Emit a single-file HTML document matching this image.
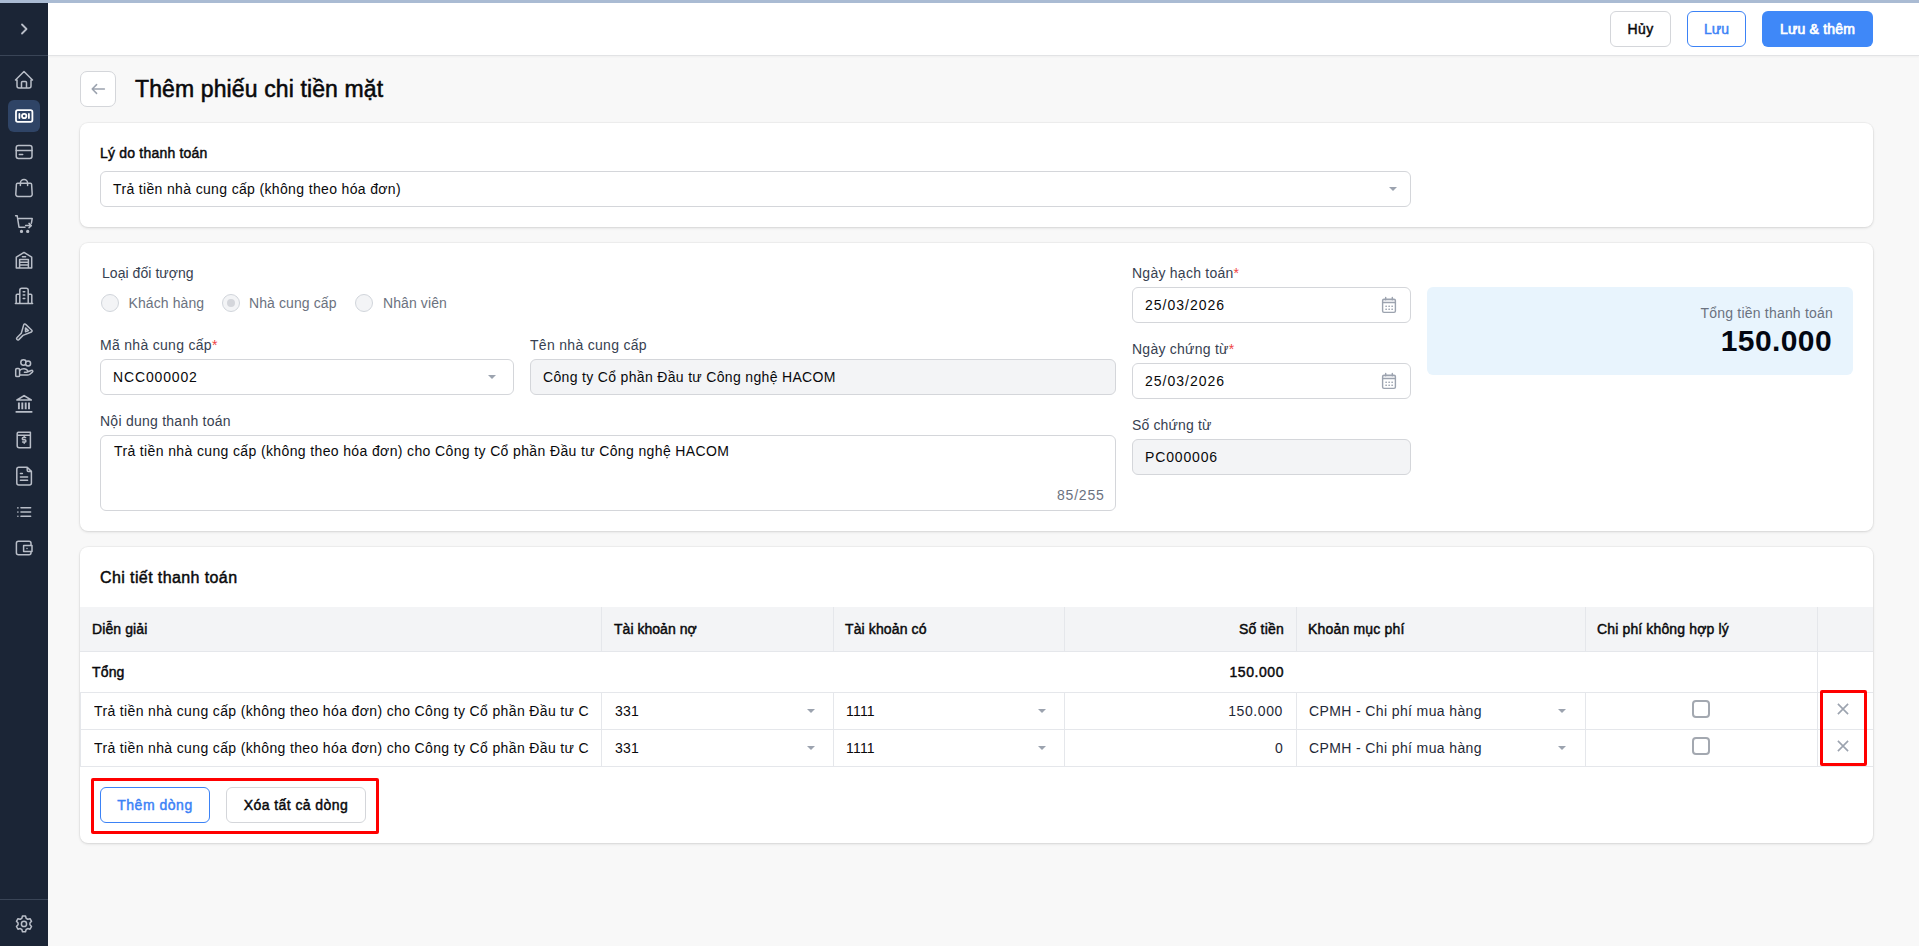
<!DOCTYPE html>
<html lang="vi">
<head>
<meta charset="utf-8">
<style>
*{box-sizing:border-box;margin:0;padding:0}
html,body{width:1919px;height:946px;overflow:hidden}
body{position:relative;background:#f8f8f8;font-family:"Liberation Sans",sans-serif;color:#09090b;font-size:14px}
.a{position:absolute}
.t{position:absolute;white-space:nowrap;line-height:20px;font-size:14px}
.b{font-weight:bold}
.sb{font-weight:normal;-webkit-text-stroke-width:.45px}
#topstrip{left:0;top:0;width:1919px;height:3px;background:#aabbd3}
#sidebar{left:0;top:3px;width:48px;height:943px;background:#1b2536}
#header{left:48px;top:3px;width:1871px;height:53px;background:#fff;border-bottom:1px solid #e2e3e5;box-shadow:0 1px 2px rgba(0,0,0,.04)}
.btn{position:absolute;height:36px;border-radius:6px;-webkit-text-stroke-width:.45px;font-size:14px;display:flex;align-items:center;justify-content:center;white-space:nowrap}
.card{position:absolute;left:80px;width:1793px;background:#fff;border-radius:8px;box-shadow:0 1px 3px rgba(0,0,0,.12),0 0 0 1px rgba(0,0,0,.03)}
.lbl{color:#374151}
.req{color:#ef4444}
.inp{position:absolute;height:36px;border:1px solid #d4d6da;border-radius:6px;background:#fff}
.dis{background:#f3f4f6}
.tri{position:absolute;width:0;height:0;border-left:4px solid transparent;border-right:4px solid transparent;border-top:4px solid #9ca3af}
.vl{position:absolute;width:1px;background:#e5e7eb}
.hl{position:absolute;height:1px;background:#e5e7eb}
.radio{position:absolute;width:18px;height:18px;border-radius:50%;border:1.5px solid #d1d5db;background:#f3f4f6}
.chk{position:absolute;width:18px;height:18px;border-radius:4px;border:2px solid #a3a8b0;background:#fff}
.red{position:absolute;border:3px solid #ff0000;border-radius:2px}
</style>
</head>
<body>
<div id="topstrip" class="a"></div>
<div id="sidebar" class="a"></div>
<div id="header" class="a"></div>

<!-- sidebar icons -->
<div class="a" style="left:0;top:55px;width:48px;height:1px;background:#3a4557"></div>
<div class="a" style="left:0;top:899px;width:48px;height:1px;background:#3a4557"></div>
<div class="a" style="left:8px;top:100px;width:32px;height:32px;border-radius:6px;background:#2f4466"></div>
<svg class="a" style="left:0;top:0" width="48" height="946" viewBox="0 0 48 946" fill="none" stroke="#b9bec8" stroke-width="1.5" stroke-linecap="round" stroke-linejoin="round">
  <!-- chevron -->
  <path d="M22 24.5l4.5 4.5l-4.5 4.5" stroke-width="1.8"/>
  <!-- home -->
  <path d="M17 80h-1.5l8.5-8.5l8.5 8.5h-1.5M17 80v6a2 2 0 0 0 2 2h10a2 2 0 0 0 2-2v-6M21.5 88v-5.5a1 1 0 0 1 1-1h3a1 1 0 0 1 1 1v5.5"/>
  <!-- cash banknote active -->
  <g stroke="#fff" stroke-width="1.8">
    <rect x="16" y="110.2" width="16.4" height="11.6" rx="1.8"/>
    <circle cx="24.2" cy="116" r="2.2"/>
    <path d="M19.4 114v4M28.9 114v4"/>
  </g>
  <!-- credit card -->
  <rect x="16.2" y="145.6" width="15.8" height="12.8" rx="2.2"/>
  <path d="M16.2 150.4h15.8M19.3 154.4h3.4"/>
  <!-- bag -->
  <path d="M17.6 183.2h12.8a1.2 1.2 0 0 1 1.2 1.1l0.6 10a2 2 0 0 1-2 2.1h-12.4a2 2 0 0 1-2-2.1l0.6-10a1.2 1.2 0 0 1 1.2-1.1zM20.4 185.5v-2.5a3.6 3.6 0 0 1 7.2 0v2.5"/>
  <!-- cart share -->
  <path d="M15.6 215.8h1.6l1.8 11.4h6M19 218.6h13.2l-0.8 4.6M25.6 225.6h5.6M29 223.4l2.3 2.2l-2.3 2.2"/>
  <circle cx="21.5" cy="231.4" r="0.9" fill="#b9bec8"/>
  <circle cx="27.7" cy="231.4" r="0.9" fill="#b9bec8"/>
  <!-- warehouse -->
  <path d="M16.3 268v-10.8l7.7-4.8l7.7 4.8v10.8zM22.4 256.8h3.2M19.6 268v-8.4h8.8v8.4M19.6 262.2h8.8M19.6 265h8.8"/>
  <!-- building -->
  <path d="M15.4 303.5h17.2M19.8 303.5v-13.2a2 2 0 0 1 2-2h4.4a2 2 0 0 1 2 2v13.2M16.2 303.5v-8.2a1 1 0 0 1 1-1h2.6M28.2 294.3h2.6a1 1 0 0 1 1 1v8.2M23.2 291.8h1.6M23.2 295h1.6M23.2 298.4h1.6"/>
  <!-- tool -->
  <path d="M23 335.4l-4.2 4.2a1.35 1.35 0 0 1-1.9-1.9l4.4-4.4l2.4-8.4a1.2 1.2 0 0 1 2-0.5l6.1 5.8a1.1 1.1 0 0 1-0.4 1.8z"/>
  <path d="M25.5 327.9l3 2.7l-3 1.2z"/>
  <!-- hand coins -->
  <circle cx="23.5" cy="362.5" r="2.7"/>
  <circle cx="28.1" cy="363.6" r="2.5" fill="#1b2536"/>
  <rect x="15.7" y="368.5" width="3.9" height="8.1" rx="1.2"/>
  <path d="M19.6 370.3C21 369.2 22.6 368.7 24.2 368.8C25.6 368.9 26.8 369.6 27.6 370.5C27.9 371.3 27.4 372.1 26.5 372.2L24.4 372.2M27.3 372L31.2 370.5A1 1 0 0 1 32.4 372.1L29.6 374.5C29 374.9 28.3 375.1 27.5 375.1L19.6 375.1"/>
  <!-- bank -->
  <path d="M16.2 411.9h15.6" stroke-width="1.6"/><path d="M17 400h14.2l-7.1-4.4z" stroke-width="1.7"/><path d="M18.9 402.6v6.6M22.3 402.6v6.6M25.7 402.6v6.6M29 402.6v6.6" stroke-width="1.9" stroke-linecap="butt"/>
  <!-- book dollar -->
  <path d="M17.2 433.4a1.2 1.2 0 0 1 1.2-1.2h12v15.6h-11.2a2 2 0 0 1-2-2zM17.2 435.2h13.2M25.6 437.6h-2.2a1.1 1.1 0 0 0 0 2.2h1.4a1.1 1.1 0 0 1 0 2.2h-2.2M24.2 436.4v1.2M24.2 442v1.2"/>
  <!-- file text -->
  <path d="M27.2 467.2v3a1.2 1.2 0 0 0 1.2 1.2h3M29.4 485h-10.6a2 2 0 0 1-2-2v-13.8a2 2 0 0 1 2-2h8.4l4.2 4.2v11.6a2 2 0 0 1-2 2zM20.4 473.6h2M20.4 477h7.2M20.4 480.2h7.2"/>
  <!-- list -->
  <path d="M21 507.8h9.6M21 512h9.6M21 516.2h9.6M17.9 507.8v0.1M17.9 512v0.1M17.9 516.2v0.1" stroke-width="1.6"/>
  <!-- wallet -->
  <path d="M31 545.4v-2.2a2 2 0 0 0-2-2h-10.6a2 2 0 0 0-2 2v9.6a2 2 0 0 0 2 2h10.6a2 2 0 0 0 2-2v-1.4M23.6 545.4h8.4v6h-8.4zM27 548.4v0.1"/>
  <!-- settings -->
  <path d="M26.15 918.30 L25.53 916.05 L22.47 916.05 L21.85 918.30 L20.22 919.24 L17.96 918.65 L16.44 921.30 L18.07 922.96 L18.07 924.84 L16.44 926.50 L17.96 929.15 L20.22 928.56 L21.85 929.50 L22.47 931.75 L25.53 931.75 L26.15 929.50 L27.78 928.56 L30.04 929.15 L31.56 926.50 L29.93 924.84 L29.93 922.96 L31.56 921.30 L30.04 918.65 L27.78 919.24Z"/>
  <circle cx="24" cy="923.9" r="2.6"/>
</svg>

<!-- header buttons -->
<div class="btn" style="left:1610px;top:11px;width:61px;border:1px solid #d4d6da;background:#fff;color:#09090b;letter-spacing:.45px">Hủy</div>
<div class="btn" style="left:1687px;top:11px;width:59px;border:1px solid #3b82f6;background:#fff;color:#3b82f6">Lưu</div>
<div class="btn" style="left:1762px;top:11px;width:111px;background:#3f88f8;color:#fff;letter-spacing:.2px;-webkit-text-stroke-width:.7px">Lưu &amp; thêm</div>

<!-- back + title -->
<div class="a" style="left:80px;top:71px;width:36px;height:36px;border:1px solid #d4d6da;border-radius:7px;background:#fff"></div>
<svg class="a" style="left:88px;top:79px" width="20" height="20" viewBox="0 0 20 20" fill="none" stroke="#9ca3af" stroke-width="1.5" stroke-linecap="round" stroke-linejoin="round"><path d="M4.2 10h12.2M4.2 10l4.4-4.4M4.2 10l4.4 4.4"/></svg>
<div class="t sb" style="left:135px;top:75px;font-size:23px;line-height:28px;letter-spacing:.12px;-webkit-text-stroke-width:.55px;color:#09090b">Thêm phiếu chi tiền mặt</div>

<!-- card 1 -->
<div class="card" style="top:123px;height:104px"></div>
<div class="t sb" style="left:100px;top:143px;color:#09090b;letter-spacing:.2px">Lý do thanh toán</div>
<div class="inp" style="left:100px;top:171px;width:1311px"></div>
<div class="t" style="left:113px;top:179px;letter-spacing:.35px">Trả tiền nhà cung cấp (không theo hóa đơn)</div>
<div class="tri" style="left:1389px;top:187px"></div>

<!-- card 2 -->
<div class="card" style="top:243px;height:288px"></div>
<div class="t lbl" style="left:102px;top:263px;letter-spacing:.05px">Loại đối tượng</div>
<div class="radio" style="left:101px;top:294px"></div>
<div class="t" style="left:128.5px;top:293px;color:#6b7280;letter-spacing:.1px">Khách hàng</div>
<div class="radio" style="left:222px;top:294px"></div>
<div class="a" style="left:227px;top:299px;width:8px;height:8px;border-radius:50%;background:#d4d6db"></div>
<div class="t" style="left:249px;top:293px;color:#6b7280;letter-spacing:.1px">Nhà cung cấp</div>
<div class="radio" style="left:355px;top:294px"></div>
<div class="t" style="left:383px;top:293px;color:#6b7280;letter-spacing:.1px">Nhân viên</div>

<div class="t lbl" style="left:100px;top:335px;letter-spacing:.3px">Mã nhà cung cấp<span class="req">*</span></div>
<div class="inp" style="left:100px;top:359px;width:414px"></div>
<div class="t" style="left:113px;top:367px;letter-spacing:.85px">NCC000002</div>
<div class="tri" style="left:488px;top:375px"></div>

<div class="t lbl" style="left:530px;top:335px;letter-spacing:.3px">Tên nhà cung cấp</div>
<div class="inp dis" style="left:530px;top:359px;width:586px"></div>
<div class="t" style="left:543px;top:367px;letter-spacing:.33px">Công ty Cổ phần Đầu tư Công nghệ HACOM</div>

<div class="t lbl" style="left:100px;top:411px;letter-spacing:.25px">Nội dung thanh toán</div>
<div class="inp" style="left:100px;top:435px;width:1016px;height:76px"></div>
<div class="t" style="left:114px;top:441px;letter-spacing:.37px">Trả tiền nhà cung cấp (không theo hóa đơn) cho Công ty Cổ phần Đầu tư Công nghệ HACOM</div>
<div class="t" style="left:1057px;top:485px;color:#6b7280;letter-spacing:.8px">85/255</div>

<div class="t lbl" style="left:1132px;top:263px;letter-spacing:.25px">Ngày hạch toán<span class="req">*</span></div>
<div class="inp" style="left:1132px;top:287px;width:279px"></div>
<div class="t" style="left:1145px;top:295px;letter-spacing:1px">25/03/2026</div>
<svg class="a cal" style="left:1380px;top:295px" width="18" height="20" viewBox="0 0 18 20" fill="none" stroke="#9ca3af" stroke-width="1.4" stroke-linecap="round"><rect x="2.6" y="4.2" width="12.8" height="3.4" fill="#e5e7eb" stroke="none"/><rect x="2.6" y="4.2" width="12.8" height="13.2" rx="1.4"/><path d="M2.6 7.6h12.8M5.7 2.4v2.4M12.3 2.4v2.4"/><g stroke-width="1.6"><path d="M6 11.2h.3M9 11.2h.3M12 11.2h.3M6 14.2h.3M9 14.2h.3M12 14.2h.3"/></g></svg>

<div class="t lbl" style="left:1132px;top:339px;letter-spacing:.25px">Ngày chứng từ<span class="req">*</span></div>
<div class="inp" style="left:1132px;top:363px;width:279px"></div>
<div class="t" style="left:1145px;top:371px;letter-spacing:1px">25/03/2026</div>
<svg class="a cal" style="left:1380px;top:371px" width="18" height="20" viewBox="0 0 18 20" fill="none" stroke="#9ca3af" stroke-width="1.4" stroke-linecap="round"><rect x="2.6" y="4.2" width="12.8" height="3.4" fill="#e5e7eb" stroke="none"/><rect x="2.6" y="4.2" width="12.8" height="13.2" rx="1.4"/><path d="M2.6 7.6h12.8M5.7 2.4v2.4M12.3 2.4v2.4"/><g stroke-width="1.6"><path d="M6 11.2h.3M9 11.2h.3M12 11.2h.3M6 14.2h.3M9 14.2h.3M12 14.2h.3"/></g></svg>

<div class="t lbl" style="left:1132px;top:415px;letter-spacing:.15px">Số chứng từ</div>
<div class="inp dis" style="left:1132px;top:439px;width:279px"></div>
<div class="t" style="left:1145px;top:447px;letter-spacing:.85px">PC000006</div>

<div class="a" style="left:1427px;top:287px;width:426px;height:88px;border-radius:6px;background:#e8f4fd"></div>
<div class="t" style="right:86px;top:303px;color:#6b7280;letter-spacing:.2px">Tổng tiền thanh toán</div>
<div class="t b" style="right:87px;top:323px;font-size:30px;line-height:36px;color:#030712;letter-spacing:.4px">150.000</div>

<!-- card 3 -->
<div class="card" style="top:547px;height:296px"></div>
<div class="t sb" style="left:100px;top:568px;font-size:16px;color:#09090b;letter-spacing:.4px">Chi tiết thanh toán</div>

<div class="a" style="left:80px;top:607px;width:1793px;height:44px;background:#f3f4f6"></div>
<div class="hl" style="left:80px;top:651px;width:1793px"></div>
<div class="hl" style="left:80px;top:692px;width:1793px"></div>
<div class="hl" style="left:80px;top:729px;width:1793px"></div>
<div class="hl" style="left:80px;top:766px;width:1793px"></div>
<!-- header vertical lines -->
<div class="vl" style="left:601px;top:607px;height:44px"></div>
<div class="vl" style="left:833px;top:607px;height:44px"></div>
<div class="vl" style="left:1064px;top:607px;height:44px"></div>
<div class="vl" style="left:1296px;top:607px;height:44px"></div>
<div class="vl" style="left:1585px;top:607px;height:44px"></div>
<div class="vl" style="left:1817px;top:607px;height:159px"></div>
<!-- data vertical lines -->
<div class="vl" style="left:80px;top:693px;height:73px"></div>
<div class="vl" style="left:601px;top:693px;height:73px"></div>
<div class="vl" style="left:833px;top:693px;height:73px"></div>
<div class="vl" style="left:1064px;top:693px;height:73px"></div>
<div class="vl" style="left:1296px;top:693px;height:73px"></div>
<div class="vl" style="left:1585px;top:693px;height:73px"></div>

<div class="t sb" style="left:92px;top:619px;letter-spacing:.1px">Diễn giải</div>
<div class="t sb" style="left:614px;top:619px;letter-spacing:.03px">Tài khoản nợ</div>
<div class="t sb" style="left:845px;top:619px;letter-spacing:.12px">Tài khoản có</div>
<div class="t sb" style="right:635px;top:619px;letter-spacing:.2px">Số tiền</div>
<div class="t sb" style="left:1308px;top:619px;letter-spacing:.18px">Khoản mục phí</div>
<div class="t sb" style="left:1597px;top:619px;letter-spacing:.14px">Chi phí không hợp lý</div>

<div class="t sb" style="left:92px;top:662px;letter-spacing:.15px">Tổng</div>
<div class="t sb" style="right:635px;top:662px;letter-spacing:.55px">150.000</div>

<!-- row 1 -->
<div class="a" style="left:94px;top:701px;width:495px;height:20px;overflow:hidden"><div class="t" style="left:0;top:0;letter-spacing:.36px">Trả tiền nhà cung cấp (không theo hóa đơn) cho Công ty Cổ phần Đầu tư Công nghệ HACOM</div></div>
<div class="t" style="left:615px;top:701px;letter-spacing:.2px">331</div>
<div class="tri" style="left:807px;top:709px"></div>
<div class="t" style="left:846px;top:701px;letter-spacing:.2px">1111</div>
<div class="tri" style="left:1038px;top:709px"></div>
<div class="t" style="right:636px;top:701px;color:#1f2937;letter-spacing:.6px">150.000</div>
<div class="t" style="left:1309px;top:701px;letter-spacing:.38px;color:#1f2937">CPMH - Chi phí mua hàng</div>
<div class="tri" style="left:1558px;top:709px"></div>
<div class="chk" style="left:1692px;top:700px"></div>
<svg class="a" style="left:1835px;top:701px" width="16" height="16" viewBox="0 0 16 16" stroke="#9ca3af" stroke-width="1.6" stroke-linecap="butt"><path d="M2.9 2.9l10.2 10.2M13.1 2.9l-10.2 10.2"/></svg>

<!-- row 2 -->
<div class="a" style="left:94px;top:738px;width:495px;height:20px;overflow:hidden"><div class="t" style="left:0;top:0;letter-spacing:.36px">Trả tiền nhà cung cấp (không theo hóa đơn) cho Công ty Cổ phần Đầu tư Công nghệ HACOM</div></div>
<div class="t" style="left:615px;top:738px;letter-spacing:.2px">331</div>
<div class="tri" style="left:807px;top:746px"></div>
<div class="t" style="left:846px;top:738px;letter-spacing:.2px">1111</div>
<div class="tri" style="left:1038px;top:746px"></div>
<div class="t" style="right:636px;top:738px;color:#1f2937;letter-spacing:.2px">0</div>
<div class="t" style="left:1309px;top:738px;letter-spacing:.38px;color:#1f2937">CPMH - Chi phí mua hàng</div>
<div class="tri" style="left:1558px;top:746px"></div>
<div class="chk" style="left:1692px;top:737px"></div>
<svg class="a" style="left:1835px;top:738px" width="16" height="16" viewBox="0 0 16 16" stroke="#9ca3af" stroke-width="1.6" stroke-linecap="butt"><path d="M2.9 2.9l10.2 10.2M13.1 2.9l-10.2 10.2"/></svg>

<div class="red" style="left:1820px;top:690px;width:47px;height:76px"></div>

<!-- bottom buttons -->
<div class="btn" style="left:100px;top:787px;width:110px;border:1px solid #3b82f6;background:#fff;color:#3b82f6;letter-spacing:.52px">Thêm dòng</div>
<div class="btn" style="left:226px;top:787px;width:140px;border:1px solid #d4d6da;background:#fff;color:#09090b;letter-spacing:.42px">Xóa tất cả dòng</div>
<div class="red" style="left:91px;top:778px;width:288px;height:56px"></div>

</body>
</html>
